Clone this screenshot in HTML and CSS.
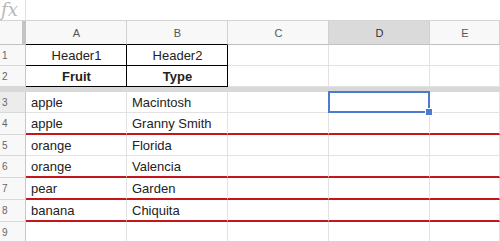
FILE: index.html
```html
<!DOCTYPE html>
<html lang="en">
<head>
    <meta charset="UTF-8">
    <title>Sheet</title>
    <link rel="stylesheet" href="styles.css">
</head>
<body>
    <div class="formula-bar">
        <div class="fx">fx</div>
        <div class="formula-input"></div>
    </div>

    <div class="sheet">
        <!-- column headers -->
        <div class="row head-row">
            <div class="num corner"></div>
            <div class="cell col-head boxed-top">A</div>
            <div class="cell col-head boxed-top boxed-right">B</div>
            <div class="cell col-head">C</div>
            <div class="cell col-head selected">D</div>
            <div class="cell col-head last">E</div>
        </div>

        <!-- frozen rows -->
        <div class="row">
            <div class="num">1</div>
            <div class="cell center boxed">Header1</div>
            <div class="cell center boxed boxed-right">Header2</div>
            <div class="cell"></div>
            <div class="cell"></div>
            <div class="cell last"></div>
        </div>
        <div class="row">
            <div class="num">2</div>
            <div class="cell center bold boxed">Fruit</div>
            <div class="cell center bold boxed boxed-right">Type</div>
            <div class="cell"></div>
            <div class="cell"></div>
            <div class="cell last"></div>
        </div>
        <div class="freeze"></div>

        <div class="row">
            <div class="num num-active">3</div>
            <div class="cell">apple</div>
            <div class="cell">Macintosh</div>
            <div class="cell"></div>
            <div class="cell active"></div>
            <div class="cell last"></div>
        </div>
        <div class="row red">
            <div class="num">4</div>
            <div class="cell">apple</div>
            <div class="cell">Granny Smith</div>
            <div class="cell"></div>
            <div class="cell"></div>
            <div class="cell last"></div>
        </div>
        <div class="row">
            <div class="num">5</div>
            <div class="cell">orange</div>
            <div class="cell">Florida</div>
            <div class="cell"></div>
            <div class="cell"></div>
            <div class="cell last"></div>
        </div>
        <div class="row red">
            <div class="num">6</div>
            <div class="cell">orange</div>
            <div class="cell">Valencia</div>
            <div class="cell"></div>
            <div class="cell"></div>
            <div class="cell last"></div>
        </div>
        <div class="row red">
            <div class="num">7</div>
            <div class="cell">pear</div>
            <div class="cell">Garden</div>
            <div class="cell"></div>
            <div class="cell"></div>
            <div class="cell last"></div>
        </div>
        <div class="row red">
            <div class="num">8</div>
            <div class="cell">banana</div>
            <div class="cell">Chiquita</div>
            <div class="cell"></div>
            <div class="cell"></div>
            <div class="cell last"></div>
        </div>
        <div class="row">
            <div class="num">9</div>
            <div class="cell"></div>
            <div class="cell"></div>
            <div class="cell"></div>
            <div class="cell"></div>
            <div class="cell last"></div>
        </div>
    </div>
</body>
</html>
```

FILE: styles.css
```css
body {
    margin: 0;
    background: #fff;
    font-family: 'Liberation Sans', Arial, sans-serif;
    font-size: 13px;
    color: #222;
    overflow: hidden;
}
.formula-bar {
    display: flex;
    height: 21px;
    box-sizing: border-box;
    border-bottom: 1px solid #d4d4d4;
}
.fx {
    width: 26px;
    box-sizing: border-box;
    border-right: 1px solid #e0e0e0;
    font-family: 'DejaVu Serif', serif;
    font-style: italic;
    font-size: 18px;
    line-height: 20px;
    color: #b8b8b8;
    padding-left: 1px;
}
.formula-input {
    flex: 1;
}
.sheet {
    display: flex;
    flex-direction: column;
}
.row {
    display: flex;
    height: 21px;
}
.row.red {
    height: 22px;
}
.head-row {
    height: 24px;
    background: #f8f8f8;
}
.num {
    width: 26px;
    flex: none;
    box-sizing: border-box;
    background: #f8f8f8;
    border-right: 1px solid #c8c8c8;
    border-bottom: 1px solid #d8d8d8;
    padding-left: 2px;
    font-size: 10px;
    color: #666;
    display: flex;
    align-items: center;
}
.num-active {
    background: #ececec;
}
.corner {
    border-right: 4px solid #c4c4c4;
    border-bottom: 1px solid #c0c0c0;
}
.cell {
    width: 101px;
    flex: none;
    box-sizing: border-box;
    border-right: 1px solid #e2e2e2;
    border-bottom: 1px solid #e2e2e2;
    padding: 0 4px 0 5px;
    display: flex;
    align-items: center;
    white-space: nowrap;
}
.cell.last {
    flex: 1;
}
.row.red .cell {
    border-bottom: 2px solid #c4161c;
}
.col-head {
    justify-content: center;
    font-size: 11px;
    color: #555;
    border-right-color: #d0d0d0;
    border-bottom-color: #c0c0c0;
}
.col-head.selected {
    background: #dadada;
    color: #333;
}
.center {
    justify-content: center;
}
.bold {
    font-weight: bold;
}
.boxed-top {
    border-bottom-color: #000;
}
.boxed {
    border-right-color: #000;
    border-bottom-color: #000;
}
.boxed-right {
    border-right-color: #000;
}
.col-head.boxed-right {
    border-right-color: #d0d0d0;
}
.freeze {
    height: 5px;
    background: #d8d8d8;
}
.cell.active {
    position: relative;
}
.cell.active::before {
    content: '';
    position: absolute;
    top: -1px;
    left: -1px;
    right: -1px;
    bottom: -1px;
    border: 2px solid #4a7bd0;
}
.cell.active::after {
    content: '';
    position: absolute;
    right: -4px;
    bottom: -4px;
    width: 6px;
    height: 6px;
    background: #4a7bd0;
    border: 1px solid #fff;
}
```
